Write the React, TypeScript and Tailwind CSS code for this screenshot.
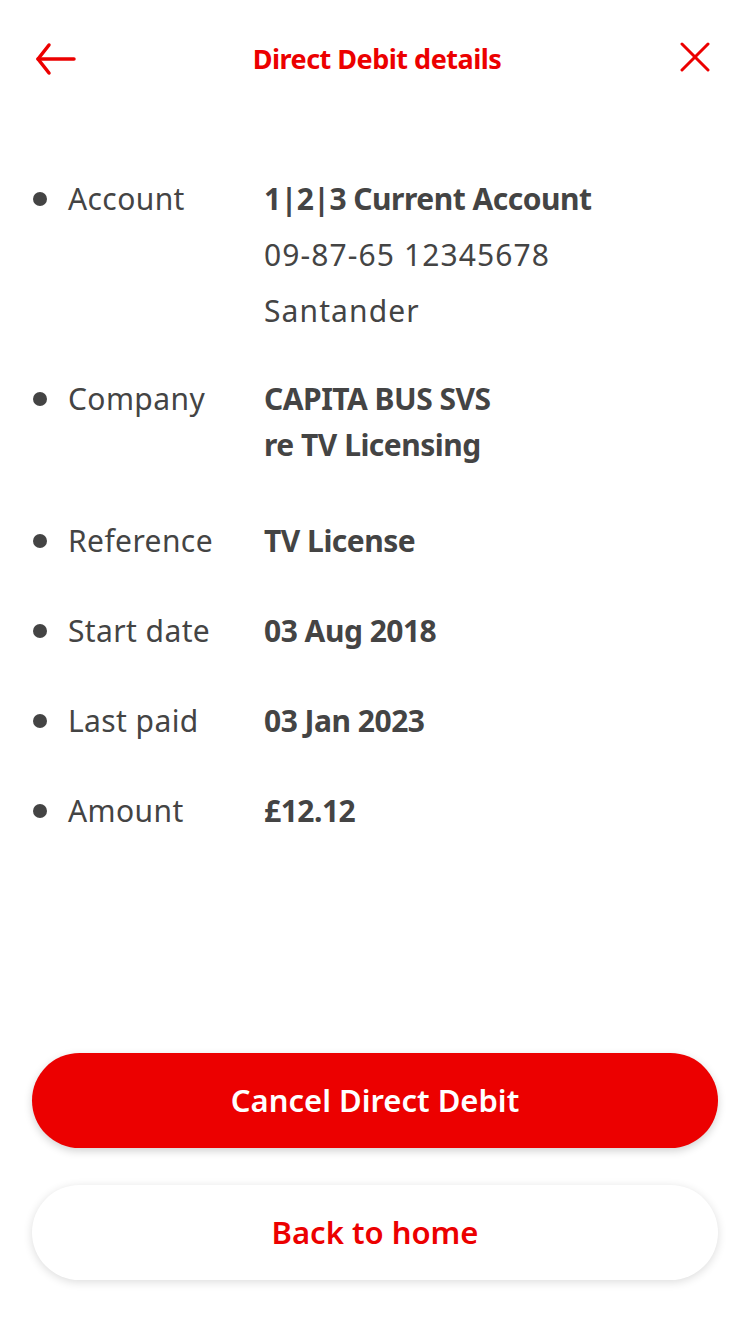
import React from "react";

const rows: { label: string; lines: string[]; bold: boolean[]; tight?: boolean }[] = [
  { label: "Account", lines: ["1|2|3 Current Account", "09-87-65 12345678", "Santander"], bold: [true, false, false] },
  { label: "Company", lines: ["CAPITA BUS SVS", "re TV Licensing"], bold: [true, true], tight: true },
  { label: "Reference", lines: ["TV License"], bold: [true] },
  { label: "Start date", lines: ["03 Aug 2018"], bold: [true] },
  { label: "Last paid", lines: ["03 Jan 2023"], bold: [true] },
  { label: "Amount", lines: ["£12.12"], bold: [true] },
];

export default function App() {
  return (
    <div
      className="w-[750px] h-[1344px] bg-white flex flex-col text-[#444444]"
      style={{ fontFamily: '"Noto Sans", "Open Sans", sans-serif' }}
    >
      <header className="h-[118px] flex items-center justify-between pl-[34px] pr-[40px] pb-[1px]">
        <button className="w-[44px] h-[40px] flex items-center text-[#ec0000]">
          <svg width="44" height="34" viewBox="0 0 44 34" fill="none" stroke="currentColor" strokeWidth="3.5" strokeLinecap="round" strokeLinejoin="round">
            <path d="M40 17H4" />
            <path d="M15 3L4 17l11 14" />
          </svg>
        </button>
        <h1 className="text-[27px] font-bold text-[#ec0000] tracking-[-0.5px] pl-[6px] mt-[2px]">Direct Debit details</h1>
        <button className="w-[40px] h-[40px] flex items-center justify-end text-[#ec0000] -mt-[3px]">
          <svg width="30" height="30" viewBox="0 0 30 30" fill="none" stroke="currentColor" strokeWidth="3" strokeLinecap="round">
            <path d="M2 2l26 26" />
            <path d="M28 2L2 28" />
          </svg>
        </button>
      </header>

      <main className="flex flex-col gap-[46px] pt-[59px] pl-[33px] pr-[30px]">
        {rows.map((row) => (
          <div key={row.label} className={`flex items-start ${row.tight ? "-mt-[3px] pb-[5px]" : ""}`}>
            <div className={`w-[35px] flex items-center ${row.tight ? "h-[46px]" : "h-[44px]"}`}>
              <span className="w-[14px] h-[14px] rounded-full bg-[#444444]" />
            </div>
            <div className={`w-[196px] text-[30px] tracking-[0.4px] ${row.tight ? "leading-[46px]" : "leading-[44px]"}`}>
              {row.label}
            </div>
            <div className={`flex flex-col ${row.tight ? "gap-0" : "gap-[12px]"}`}>
              {row.lines.map((line, i) => (
                <div
                  key={i}
                  className={`text-[30px] ${row.tight ? "leading-[46px]" : "leading-[44px]"} ${row.bold[i] ? "font-bold tracking-[-0.5px]" : "font-normal tracking-[1.1px]"}`}
                >
                  {line}
                </div>
              ))}
            </div>
          </div>
        ))}
      </main>

      <div className="flex-1" />

      <footer className="flex flex-col gap-[37px] px-[32px] pb-[64px]">
        <button className="h-[95px] w-full rounded-full bg-[#ec0000] text-white text-[31px] font-semibold shadow-[0_3px_8px_rgba(0,0,0,0.18)]">
          Cancel Direct Debit
        </button>
        <button className="h-[95px] w-full rounded-full bg-white text-[#ec0000] text-[31px] font-semibold shadow-[0_2px_10px_rgba(0,0,0,0.14)]">
          Back to home
        </button>
      </footer>
    </div>
  );
}
